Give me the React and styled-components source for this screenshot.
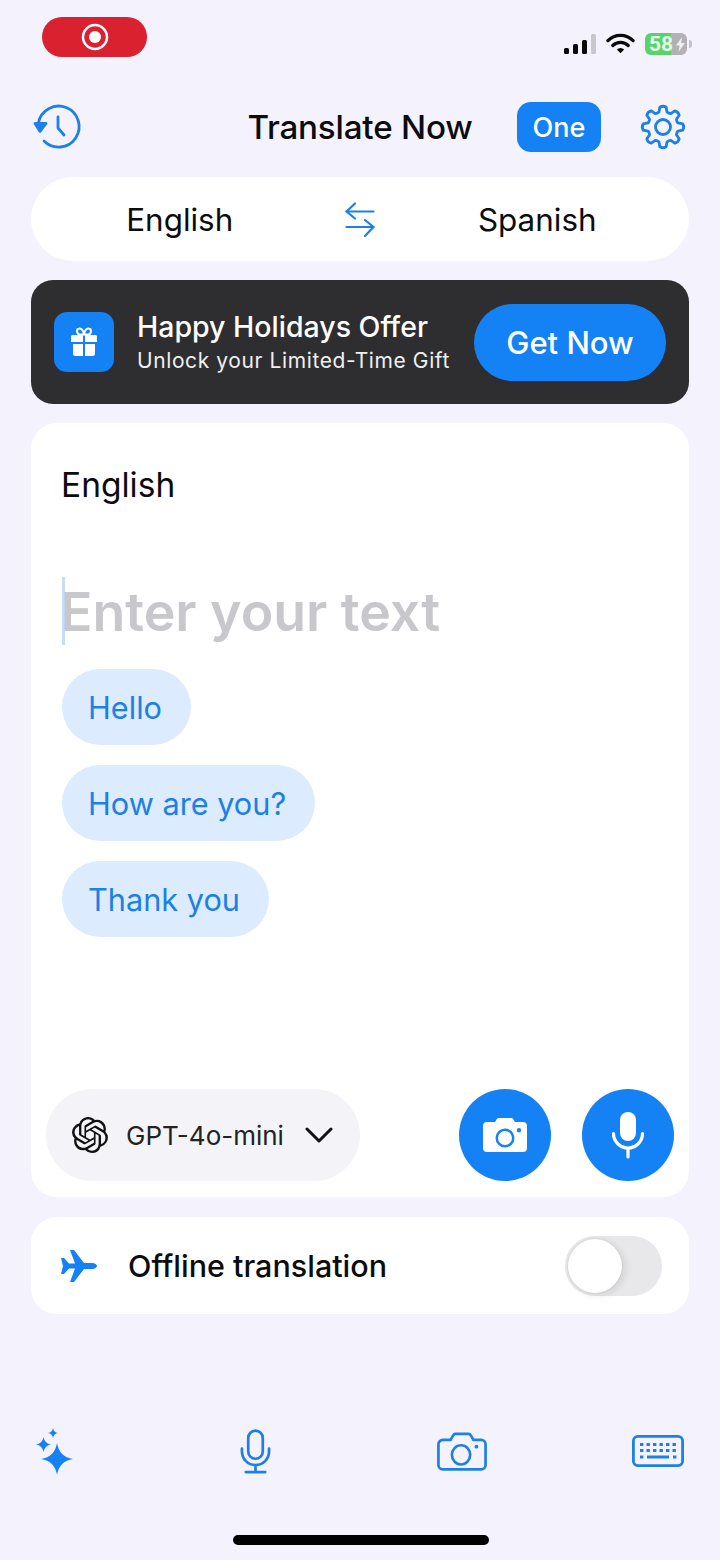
import React from "react";
import styled, { createGlobalStyle } from "styled-components";
import { SiOpenai } from "react-icons/si";

const BLUE = "#1482f5";
const LINE = "#1c80e4";

const GlobalStyle = createGlobalStyle`
  html, body {
    margin: 0;
    padding: 0;
    background: #f4f3fd;
  }
  * { box-sizing: border-box; }
`;

const Page = styled.div`
  width: 720px;
  height: 1560px;
  display: flex;
  flex-direction: column;
  overflow: hidden;
  background: #f4f3fd;
  color: #0c0c0e;
  font-family: Inter, "Liberation Sans", sans-serif;
`;

const StatusBar = styled.div`
  height: 77px;
  padding: 17px 33px 0 42px;
  display: flex;
  justify-content: space-between;
  align-items: flex-start;
`;

const RecordPill = styled.div`
  width: 105px;
  height: 40px;
  border-radius: 20px;
  background: #d9212f;
  display: flex;
  align-items: center;
  justify-content: center;
`;

const StatusIcons = styled.div`
  display: flex;
  align-items: center;
  gap: 10px;
  margin-top: 16px;
`;

const Battery = styled.div`
  position: relative;
  width: 42px;
  height: 22px;
  border-radius: 6px;
  background: linear-gradient(90deg, #58d269 0 62%, #b2b2b6 62% 100%);
  color: #e9fbe9;
  font-family: Roboto, sans-serif;
  font-size: 21px;
  font-weight: 700;
  padding-left: 4px;
  display: flex;
  align-items: center;
  gap: 3px;

  &::after {
    content: "";
    position: absolute;
    right: -5px;
    top: 7px;
    width: 3px;
    height: 8px;
    border-radius: 0 3px 3px 0;
    background: #c4c4c8;
  }
`;

const Header = styled.header`
  height: 100px;
  padding: 0 35px;
  display: grid;
  grid-template-columns: 1fr auto 1fr;
  align-items: center;
`;

const HeaderEnd = styled.div`
  display: flex;
  align-items: center;
  justify-content: flex-end;
  gap: 40px;
`;

const Title = styled.h1`
  margin: 0;
  font-size: 33.2px;
  font-weight: 500;
  letter-spacing: -0.2px;
`;

const OneBadge = styled.div`
  width: 84px;
  height: 50px;
  border-radius: 14px;
  background: ${BLUE};
  color: #fff;
  font-size: 27px;
  font-weight: 500;
  display: flex;
  align-items: center;
  justify-content: center;
`;

const Main = styled.main`
  padding: 0 31px;
  display: flex;
  flex-direction: column;
  gap: 19px;
`;

const LanguagePill = styled.div`
  height: 84px;
  border-radius: 42px;
  background: #fff;
  padding: 1px 3px 0 0;
  display: grid;
  grid-template-columns: 1fr 60px 1fr;
  align-items: center;
  justify-items: center;
  font-size: 31.4px;

  svg {
    margin-left: 2px;
  }
`;

const Banner = styled.section`
  height: 124px;
  border-radius: 22px;
  background: #2e2e30;
  padding: 0 23px;
  display: flex;
  align-items: center;
`;

const GiftTile = styled.div`
  width: 60px;
  height: 60px;
  border-radius: 13px;
  background: ${BLUE};
  display: flex;
  align-items: center;
  justify-content: center;
`;

const BannerText = styled.div`
  margin: 1px 0 0 23px;
  flex: 1;
  color: #fff;
`;

const BannerTitle = styled.div`
  font-size: 28.5px;
  font-weight: 500;
  line-height: 36px;
  white-space: nowrap;
`;

const BannerSub = styled.div`
  margin-top: 1px;
  font-size: 21px;
  letter-spacing: 0.6px;
  line-height: 30px;
  color: #f0f0f2;
  white-space: nowrap;
`;

const GetNow = styled.button`
  width: 192px;
  height: 77px;
  flex: none;
  border: 0;
  border-radius: 39px;
  background: ${BLUE};
  color: #fff;
  font: 500 31px Inter, "Liberation Sans", sans-serif;
`;

const InputCard = styled.section`
  height: 774px;
  border-radius: 26px;
  background: #fff;
  display: flex;
  flex-direction: column;
`;

const InputBody = styled.div`
  flex: 1;
  padding: 41px 31px 0;
  display: flex;
  flex-direction: column;
  align-items: flex-start;
`;

const SourceLabel = styled.div`
  margin-left: -1px;
  font-size: 33.5px;
  line-height: 42px;
`;

const Placeholder = styled.div`
  position: relative;
  margin-top: 71px;
  height: 68px;
  font-size: 53.6px;
  font-weight: 600;
  line-height: 70px;
  text-indent: -2px;
  color: #c8c8cc;
  white-space: nowrap;

  &::before {
    content: "";
    position: absolute;
    left: 0;
    top: 0;
    width: 3px;
    height: 68px;
    background: #bcd7f7;
    opacity: 0.85;
  }
`;

const Chips = styled.div`
  margin-top: 24px;
  display: flex;
  flex-direction: column;
  align-items: flex-start;
  gap: 20px;
`;

const Chip = styled.div`
  height: 76px;
  padding: 0 29px 0 26px;
  border-radius: 38px;
  background: #dcebfd;
  color: ${LINE};
  font-size: 30.7px;
  display: flex;
  align-items: center;
`;

const InputFooter = styled.div`
  padding: 0 15px 16px;
  display: flex;
  align-items: center;
  gap: 31px;
`;

const ModelPill = styled.div`
  width: 314px;
  height: 92px;
  margin-right: auto;
  border-radius: 46px;
  background: #f4f4f8;
  padding: 0 27px 0 26px;
  display: flex;
  align-items: center;
  color: #222;
  font-size: 26px;
`;

const ModelName = styled.span`
  margin-left: 18px;
  flex: 1;
`;

const RoundAction = styled.button`
  width: 92px;
  height: 92px;
  border: 0;
  padding: 0;
  border-radius: 50%;
  background: ${BLUE};
  display: flex;
  align-items: center;
  justify-content: center;
`;

const OfflineCard = styled.section`
  height: 97px;
  margin-top: 1px;
  border-radius: 26px;
  background: #fff;
  padding: 0 27px 0 30px;
  display: flex;
  align-items: center;
`;

const OfflineLabel = styled.div`
  flex: 1;
  margin-left: 31px;
  font-size: 30.5px;
  font-weight: 500;
`;

const Toggle = styled.div`
  width: 97px;
  height: 60px;
  border-radius: 30px;
  background: #e8e8eb;
  padding: 3px;
`;

const ToggleKnob = styled.div`
  width: 54px;
  height: 54px;
  border-radius: 50%;
  background: #fff;
  box-shadow: 0 0 2px rgba(0, 0, 0, 0.14), 3px 2px 8px rgba(0, 0, 0, 0.1);
`;

const TabBar = styled.nav`
  margin-top: 110px;
  padding-left: 25px;
  display: grid;
  grid-template-columns: 200px 207px 196px 60px;
  align-items: center;
`;

const TabSlot = styled.div`
  width: 60px;
  height: 54px;
  display: flex;
  align-items: center;
  justify-content: center;
`;

const HomeIndicator = styled.div`
  width: 256px;
  height: 10px;
  margin: 57px 0 0 233px;
  border-radius: 5px;
  background: #000;
`;

// four point star, the sides pull in towards the centre
const star = (cx, cy, r) => {
  const k = r * 0.14;
  return `M${cx} ${cy - r}Q${cx + k} ${cy - k} ${cx + r} ${cy}Q${cx + k} ${cy + k} ${cx} ${cy + r}Q${cx - k} ${cy + k} ${cx - r} ${cy}Q${cx - k} ${cy - k} ${cx} ${cy - r}Z`;
};

// eight tooth cog outline around (0,0)
const cog = (() => {
  const pt = (r, deg) => {
    const a = (deg * Math.PI) / 180;
    return `${(r * Math.cos(a)).toFixed(2)} ${(r * Math.sin(a)).toFixed(2)}`;
  };
  let d = "";
  for (let i = 0; i < 8; i++) {
    const a = i * 45 - 90;
    d += `${i === 0 ? "M" : "L"}${pt(15.5, a - 15)}L${pt(20, a - 9)}Q${pt(21.8, a)} ${pt(20, a + 9)}L${pt(15.5, a + 15)}Q${pt(14.6, a + 22.5)} ${pt(15.5, a + 30)}`;
  }
  return d + "Z";
})();

const HistoryIcon = () => (
  <svg width="46" height="44" viewBox="0 0 46 44" overflow="visible" fill="none" stroke={LINE} strokeWidth="2.800" strokeLinecap="round" strokeLinejoin="round">
    <path d="M3.400 18A20.500 20.500 0 1 1 9 36" />
    <path d="M0 18.500h11L5 26.500z" fill={LINE} />
    <path d="M23 12v11l6 7" />
  </svg>
);

const GearIcon = () => (
  <svg width="44" height="44" viewBox="-22 -22 44 44" overflow="visible" fill="none" stroke={LINE} strokeWidth="2.800" strokeLinejoin="round">
    <path d={cog} />
    <circle r="7.500" />
  </svg>
);

const SwapIcon = () => (
  <svg width="30" height="36" viewBox="0 0 30 36" fill="none" stroke={LINE} strokeWidth="2.200" strokeLinecap="round" strokeLinejoin="round">
    <path d="M10 1.500 1.500 9.500l8.500 7" />
    <path d="M1.500 9.500h27" />
    <path d="M20 18l8.500 7-8.500 9" />
    <path d="M1.500 25h27" />
  </svg>
);

const GiftIcon = () => (
  <svg width="28" height="30" viewBox="0 0 28 30" fill="#fff">
    <path d="M1 9.500a1.500 1.500 0 0 1 1.500-1.500H13v7H1zM15 8h10.500A1.500 1.500 0 0 1 27 9.500V15H15zM3 17h10v12H5.500A2.500 2.500 0 0 1 3 26.500zM15 17h10v9.500A2.500 2.500 0 0 1 22.500 29H15z" />
    <path d="M14 7.500 10 7.500C6.500 7.500 6 2 9 1.500c2.500-.5 4.500 2 5 6zm0 0h4c3.500 0 4-5.500 1-6-2.500-.5-4.500 2-5 6z" fill="none" stroke="#fff" strokeWidth="2" />
  </svg>
);

const CameraGlyph = () => (
  <svg width="46" height="36" viewBox="0 0 46 36" fill="#fff">
    <path fillRule="evenodd" d="M5 5h8l2-3.200A2 2 0 0 1 16.800 1h12.400a2 2 0 0 1 1.800.800L33 5h8a4 4 0 0 1 4 4v22a4 4 0 0 1-4 4H5a4 4 0 0 1-4-4V9a4 4 0 0 1 4-4zm18 6.500a9.500 9.500 0 1 0 0 19 9.500 9.500 0 0 0 0-19zm0 2.500a7 7 0 1 1 0 14 7 7 0 0 1 0-14zm14-3a2.200 2.200 0 1 0 0 4.400 2.200 2.200 0 0 0 0-4.400z" />
  </svg>
);

const MicGlyph = () => (
  <svg width="34" height="48" viewBox="0 0 34 48">
    <rect x="9" y="1" width="16" height="29" rx="8" fill="#fff" />
    <path d="M2.500 22.500a14.500 14.500 0 0 0 29 0M17 37v9" fill="none" stroke="#fff" strokeWidth="3.200" strokeLinecap="round" />
  </svg>
);

const PlaneIcon = () => (
  <svg width="36" height="32" viewBox="0 0 36 32" fill={BLUE}>
    <path d="M0 8h3l5 5.500h6L9 0h4l10 13h8c3 0 5 1.500 5 3s-2 3-5 3h-8L13 32H9l5-13.500H8L3 24H0l2-8z" />
  </svg>
);

const SparkIcon = () => (
  <svg width="38" height="47" viewBox="0 0 38 47" fill={BLUE}>
    <path d={star(21, 31, 16)} />
    <path d={star(7.5, 16.5, 7.5)} />
    <path d={star(17, 5, 5)} />
  </svg>
);

const TabMicIcon = () => (
  <svg width="31" height="45" viewBox="0 0 32 46" fill="none" stroke={LINE} strokeWidth="2.800" strokeLinecap="round">
    <rect x="8.500" y="1.500" width="15" height="29" rx="7.500" />
    <path d="M2 20v3a14 14 0 0 0 28 0v-3M16 37v7M6 44.200h20" />
  </svg>
);

const TabCameraIcon = () => (
  <svg width="50" height="39" viewBox="0 0 52 40" fill="none" stroke={LINE} strokeWidth="2.800" strokeLinejoin="round">
    <path d="M6 8h8l3-5a3 3 0 0 1 2-1.300h14a3 3 0 0 1 2 1.300l3 5h8a4.500 4.500 0 0 1 4.500 4.500v21.500A4.500 4.500 0 0 1 46 38.500H6A4.500 4.500 0 0 1 1.500 34V12.500A4.500 4.500 0 0 1 6 8z" />
    <ellipse cx="25" cy="23.500" rx="9.500" ry="10" />
    <circle cx="41" cy="15" r="2" fill={LINE} stroke="none" />
  </svg>
);

const KeyboardIcon = () => (
  <svg width="52" height="32" viewBox="0 0 52 32" fill="none" stroke={LINE}>
    <rect x="1.400" y="1.400" width="49.200" height="29.200" rx="4.500" strokeWidth="2.800" />
    <path d="M8 9.500h36M8 15.500h36" strokeWidth="3.200" strokeDasharray="3.400 3.100" />
    <path d="M8 22h3.400M41 22h3.400M15 22h22" strokeWidth="3.200" />
  </svg>
);

export default function App() {
  return (
    <Page>
      <GlobalStyle />
      <StatusBar>
        <RecordPill>
          <svg width="28" height="28" viewBox="0 0 28 28">
            <circle cx="14" cy="14" r="12" fill="none" stroke="#fff" strokeWidth="2.500" />
            <circle cx="14" cy="14" r="6" fill="#fff" />
          </svg>
        </RecordPill>
        <StatusIcons>
          <svg width="32" height="20" viewBox="0 0 32 20" fill="#0a0a0a">
            <rect x="0" y="14" width="5" height="6" rx="1.500" />
            <rect x="9" y="10" width="5" height="10" rx="1.500" />
            <rect x="18" y="6" width="5" height="14" rx="1.500" />
            <rect x="27" y="0" width="5" height="20" rx="1.500" fill="#c8c8cc" />
          </svg>
          <svg width="29" height="22" viewBox="0 0 30 22" fill="none" stroke="#0a0a0a" strokeWidth="3.400" strokeLinecap="round">
            <path d="M2 7.500a18.500 18.500 0 0 1 26 0" />
            <path d="M7 12.500a11.500 11.500 0 0 1 16 0" />
            <path d="M15 20.500l-3.800-3.800a5.400 5.400 0 0 1 7.600 0z" fill="#0a0a0a" stroke="none" />
          </svg>
          <Battery>
            58
            <svg width="9" height="15" viewBox="0 0 9 15" fill="#eee">
              <path d="M6 0 0 8.500h3.500L2.500 15 9 6H5.200z" />
            </svg>
          </Battery>
        </StatusIcons>
      </StatusBar>

      <Header>
        <HistoryIcon />
        <Title>Translate Now</Title>
        <HeaderEnd>
          <OneBadge>One</OneBadge>
          <GearIcon />
        </HeaderEnd>
      </Header>

      <Main>
        <LanguagePill>
          <span>English</span>
          <SwapIcon />
          <span>Spanish</span>
        </LanguagePill>

        <Banner>
          <GiftTile>
            <GiftIcon />
          </GiftTile>
          <BannerText>
            <BannerTitle>Happy Holidays Offer</BannerTitle>
            <BannerSub>Unlock your Limited-Time Gift</BannerSub>
          </BannerText>
          <GetNow>Get Now</GetNow>
        </Banner>

        <InputCard>
          <InputBody>
            <SourceLabel>English</SourceLabel>
            <Placeholder>Enter your text</Placeholder>
            <Chips>
              <Chip>Hello</Chip>
              <Chip>How are you?</Chip>
              <Chip>Thank you</Chip>
            </Chips>
          </InputBody>
          <InputFooter>
            <ModelPill>
              <SiOpenai size={36} color="#111" />
              <ModelName>GPT-4o-mini</ModelName>
              <svg width="28" height="16" viewBox="0 0 28 16" fill="none" stroke="#111" strokeWidth="3" strokeLinecap="round" strokeLinejoin="round">
                <path d="M2 2l12 12L26 2" />
              </svg>
            </ModelPill>
            <RoundAction aria-label="Camera">
              <CameraGlyph />
            </RoundAction>
            <RoundAction aria-label="Microphone">
              <MicGlyph />
            </RoundAction>
          </InputFooter>
        </InputCard>

        <OfflineCard>
          <PlaneIcon />
          <OfflineLabel>Offline translation</OfflineLabel>
          <Toggle>
            <ToggleKnob />
          </Toggle>
        </OfflineCard>
      </Main>

      <TabBar>
        <TabSlot><SparkIcon /></TabSlot>
        <TabSlot><TabMicIcon /></TabSlot>
        <TabSlot><TabCameraIcon /></TabSlot>
        <TabSlot><KeyboardIcon /></TabSlot>
      </TabBar>

      <HomeIndicator />
    </Page>
  );
}
